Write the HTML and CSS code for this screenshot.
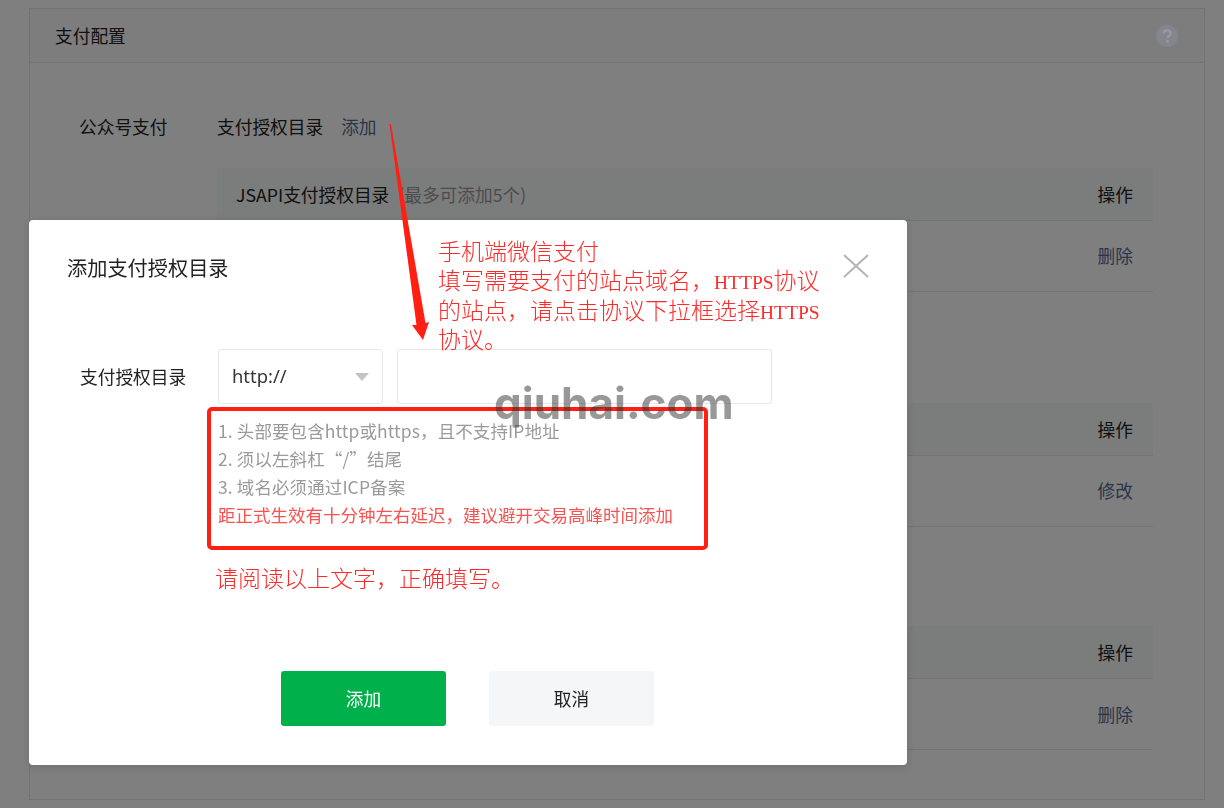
FILE: index.html
```html
<!DOCTYPE html>
<html lang="zh-CN">
<head>
<meta charset="utf-8">
<title>支付配置</title>
<link rel="stylesheet" href="styles.css">
</head>
<body>
<main class="panel">
  <header class="panel-head">
    <h2 class="panel-title">支付配置</h2>
    <svg class="help" viewBox="0 0 22 22" width="22" height="22"><circle cx="11" cy="11" r="11" fill="#85868d"/><path d="M7.6 8.4c.2-2 1.6-3 3.5-3 2 0 3.4 1.1 3.4 2.9 0 1.3-.7 2-1.7 2.7-.9.6-1.2 1-1.2 2" fill="none" stroke="#989aa0" stroke-width="2.2"/><circle cx="11.5" cy="16.2" r="1.4" fill="#989aa0"/></svg>
  </header>
  <div class="panel-body">
    <div class="line">
      <span class="line-label">公众号支付</span>
      <span>支付授权目录</span>
      <a class="link add-link">添加</a>
    </div>
    <section class="table first">
      <div class="thead"><span>JSAPI支付授权目录<em class="muted">(最多可添加5个)</em></span><span>操作</span></div>
      <div class="trow rowa"><a class="link">删除</a></div>
    </section>
    <section class="table second">
      <div class="thead end"><span>操作</span></div>
      <div class="trow rowb"><a class="link">修改</a></div>
    </section>
    <section class="table third">
      <div class="thead end"><span>操作</span></div>
      <div class="trow rowc"><a class="link">删除</a></div>
    </section>
  </div>
</main>

<div class="mask"></div>

<div class="modal">
  <h3 class="modal-title">添加支付授权目录</h3>
  <svg class="close" viewBox="0 0 26 24" width="26" height="24"><path d="M1 1 25 23M25 1 1 23" stroke="#b4b4b4" stroke-width="2" fill="none"/></svg>
  <div class="form-row">
    <label class="form-label">支付授权目录</label>
    <div class="select"><span>http://</span><i class="caret"></i></div>
    <div class="input"></div>
  </div>
  <div class="hints">
    <p>1. 头部要包含http或https，且不支持IP地址</p>
    <p>2. 须以左斜杠“/”结尾</p>
    <p>3. 域名必须通过ICP备案</p>
    <p class="warn">距正式生效有十分钟左右延迟，建议避开交易高峰时间添加</p>
  </div>
  <div class="actions">
    <button class="btn primary">添加</button>
    <button class="btn plain">取消</button>
  </div>
</div>

<div class="note note-top">
  <div class="note-line">手机端微信支付</div>
  <div class="note-line">填写需要支付的站点域名，<span class="latin">HTTPS</span>协议</div>
  <div class="note-line">的站点，请点击协议下拉框选择<span class="latin">HTTPS</span></div>
  <div class="note-line">协议。</div>
</div>
<div class="note note-bottom">请阅读以上文字，正确填写。</div>
<div class="redbox"></div>
<svg class="arrow" viewBox="0 0 1224 808" width="1224" height="808"><polygon points="389.5,124 391,124 425.5,323 429,322 423,340 412,325 416.5,325" fill="#ff1f13"/></svg>
<div class="watermark">qiuhai.com</div>
</body>
</html>
```

FILE: styles.css
```css
* { box-sizing: border-box; }
html, body { margin: 0; height: 808px; overflow: hidden; }
body {
  background: #fff;
  color: #222;
  font: 17.7px/28px "Noto Sans CJK SC", "Liberation Sans", sans-serif;
}
h2, h3, p { margin: 0; font-weight: 400; font-size: inherit; }
em { font-style: normal; }

.panel {
  margin: 8px 19px 0 29px;
  height: 792px;
  border: 1px solid #e7e7eb;
}
.panel-head {
  height: 54px;
  padding: 0 26px 2px 25px;
  background: #fafbfb;
  border-bottom: 1px solid #e7e7eb;
  display: flex;
  align-items: center;
  justify-content: space-between;
}
.help { position: relative; z-index: 1; margin-top: 2px; }
.panel-body { padding: 49px 51px 0 187px; }
.line { display: flex; align-items: center; position: relative; height: 28px; }
.line-label { position: absolute; left: -138px; }
.add-link { margin-left: 18px; }
.link { color: #576b95; }
.muted { color: #9a9a9a; margin-left: 9px; }
.table { border-bottom: 1px solid #e7e7eb; }
.first { margin-top: 28px; }
.second { margin-top: 111px; }
.third { margin-top: 99px; }
.thead {
  height: 53px;
  padding: 0 20px 0 19px;
  background: #f6f8f9;
  border-bottom: 1px solid #e7e7eb;
  display: flex;
  align-items: center;
  justify-content: space-between;
}
.thead.end { justify-content: flex-end; }
.trow { display: flex; justify-content: flex-end; align-items: center; padding-right: 20px; height: 70px; }
.rowa, .rowb { padding-bottom: 2px; }

.mask { position: fixed; inset: 0; background: rgba(0, 0, 0, .5); }

.modal {
  position: absolute;
  left: 29px;
  top: 220px;
  width: 878px;
  height: 545px;
  background: #fff;
  border-radius: 4px;
  box-shadow: 0 2px 10px rgba(0, 0, 0, .12);
  padding: 32px 38px 0 38px;
}
.modal-title { font-size: 20.2px; line-height: 32px; }
.close { position: absolute; left: 814px; top: 34px; }
.form-row { display: flex; align-items: center; margin-top: 65px; height: 55px; }
.form-label { width: 151px; padding: 0 0 2px 13px; flex: none; }
.select {
  width: 165px;
  height: 55px;
  flex: none;
  border: 1px solid #e7e7eb;
  border-radius: 3px;
  padding: 0 13px 2px;
  display: flex;
  align-items: center;
  justify-content: space-between;
  color: #353535;
  font-family: "Noto Sans", "Noto Sans CJK SC", sans-serif;
  font-size: 18.4px;
}
.caret {
  border: 7px solid transparent;
  border-top: 8px solid #c4c4c4;
  border-bottom: 0;
  width: 0;
  margin-top: 2px;
}
.input {
  width: 375px;
  height: 55px;
  margin-left: 14px;
  flex: none;
  border: 1px solid #e7e7eb;
  border-radius: 3px;
}
.hints { margin: 13px 0 0 151px; color: #9a9a9a; font-size: 17.5px; letter-spacing: .1px; }
.warn { color: #fa5151; letter-spacing: 0; }
.actions { display: flex; gap: 43px; margin: 142px 0 0 214px; }
.btn {
  width: 165px;
  height: 55px;
  border: 0;
  border-radius: 3px;
  font: inherit;
  font-size: 17.7px;
  padding: 0 0 2px;
}
.primary { background: #00b04a; color: #fff; }
.plain { background: #f5f6f8; color: #222; }

.note {
  position: absolute;
  color: #ff2a2a;
  font-family: "Noto Sans CJK SC", sans-serif;
  font-weight: 300;
  font-size: 23px;
  white-space: nowrap;
}
.note-line { height: 29.4px; line-height: 29.4px; }
.latin { font-family: "Liberation Serif", serif; font-size: 19.5px; line-height: 1; }
.note-top { left: 438px; top: 236px; }
.note-bottom { left: 215px; top: 562px; line-height: 30px; }
.redbox {
  position: absolute;
  left: 207px;
  top: 407px;
  width: 501px;
  height: 143px;
  border: 4px solid #ff1f13;
  border-radius: 5px;
}
.arrow { position: absolute; left: 0; top: 0; }
.watermark {
  position: absolute;
  left: 494px;
  top: 378px;
  color: rgba(50, 50, 50, .5);
  font: 700 44px/50px Inter, "Liberation Sans", sans-serif;
}
```
